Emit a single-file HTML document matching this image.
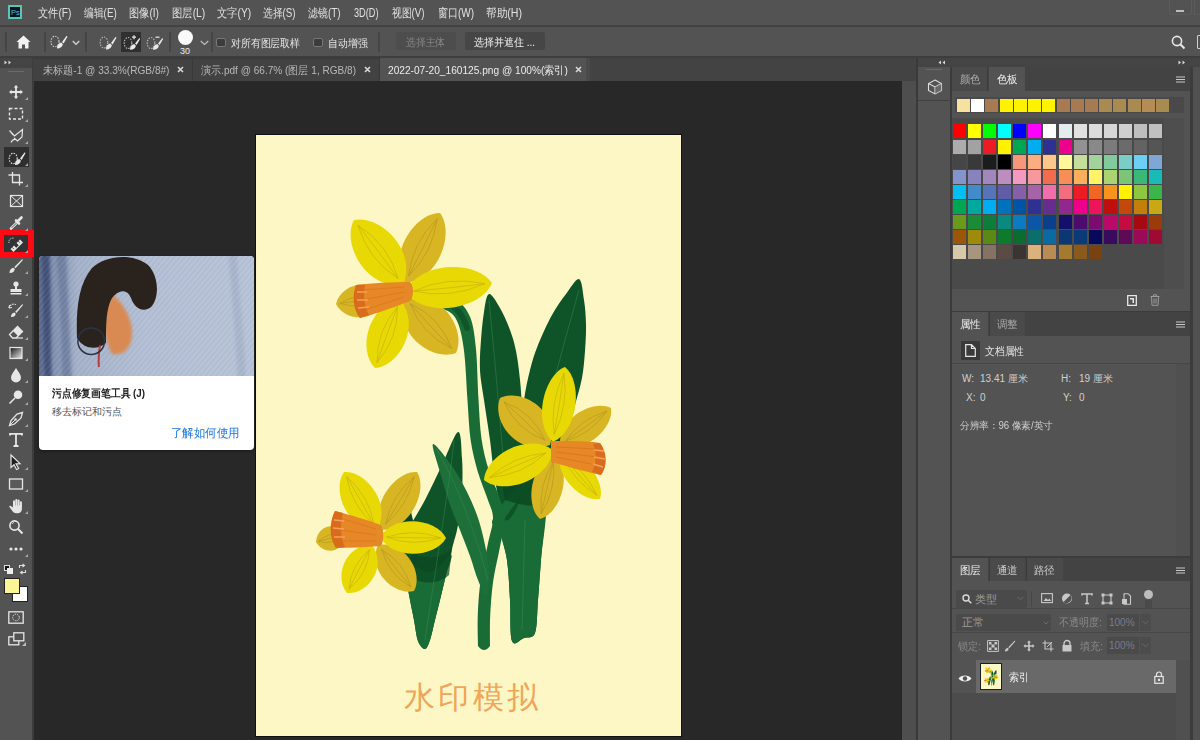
<!DOCTYPE html>
<html><head><meta charset="utf-8">
<style>
*{box-sizing:border-box;margin:0;padding:0}
html,body{width:1200px;height:740px;overflow:hidden;background:#535353;font-family:"Liberation Sans",sans-serif;color:#e0e0e0;font-size:12px}
.a{position:absolute}
.t{position:absolute;white-space:nowrap;line-height:1}
.sw{position:absolute;width:14px;height:14px}
.rs{position:absolute;width:13px;height:13px}
svg{position:absolute;overflow:visible}
</style></head><body>
<!-- ============ MENU BAR ============ -->
<div class="a" style="left:0;top:0;width:1200px;height:25px;background:#535353"></div>
<div class="a" style="left:0;top:25px;width:1200px;height:2px;background:#424242"></div>
<!-- PS logo -->
<div class="a" style="left:8px;top:5px;width:14px;height:14px;background:#001820;border:2px solid #5cc4b4"></div>
<div class="t" style="left:11px;top:8.5px;font-size:7.5px;color:#5fb9d6">Ps</div>
<div id="menu">
<div class="t" style="left:38.3px;top:7px;--w:33.4px;transform:scaleX(0.8493);transform-origin:0 0">文件(F)</div>
<div class="t" style="left:83.8px;top:7px;--w:32.7px;transform:scaleX(0.8175);transform-origin:0 0">编辑(E)</div>
<div class="t" style="left:129px;top:7px;--w:30px;transform:scaleX(0.8492);transform-origin:0 0">图像(I)</div>
<div class="t" style="left:171.7px;top:7px;--w:33.3px;transform:scaleX(0.8611);transform-origin:0 0">图层(L)</div>
<div class="t" style="left:216.5px;top:7px;--w:34.3px;transform:scaleX(0.8575);transform-origin:0 0">文字(Y)</div>
<div class="t" style="left:263.4px;top:7px;--w:32.6px;transform:scaleX(0.8150);transform-origin:0 0">选择(S)</div>
<div class="t" style="left:308.4px;top:7px;--w:32.6px;transform:scaleX(0.8289);transform-origin:0 0">滤镜(T)</div>
<div class="t" style="left:353.5px;top:7px;--w:24.5px;transform:scaleX(0.7656);transform-origin:0 0">3D(D)</div>
<div class="t" style="left:391.8px;top:7px;--w:32.6px;transform:scaleX(0.8150);transform-origin:0 0">视图(V)</div>
<div class="t" style="left:438px;top:7px;--w:36px;transform:scaleX(0.8309);transform-origin:0 0">窗口(W)</div>
<div class="t" style="left:486.4px;top:7px;--w:36px;transform:scaleX(0.8851);transform-origin:0 0">帮助(H)</div>
</div>
<!-- window buttons -->
<div class="a" style="left:1169px;top:-1px;width:23px;height:16px;border:1px solid #5c5c5c;border-top:none;border-radius:0 0 3px 3px"></div>
<div class="a" style="left:1176px;top:10px;width:8px;height:2px;background:#bdbdbd"></div>
<div class="a" style="left:1194px;top:-1px;width:10px;height:16px;border:1px solid #5c5c5c;border-top:none"></div>

<!-- ============ OPTIONS BAR ============ -->
<div class="a" style="left:0;top:27px;width:1200px;height:29px;background:#535353"></div>
<div class="a" style="left:0;top:56px;width:1200px;height:2px;background:#3d3d3d"></div>

<!-- options content -->
<div class="a" style="left:5px;top:32px;width:2px;height:20px;background:#454545"></div>
<svg style="left:16px;top:35px" width="15" height="14" viewBox="0 0 15 14"><path d="M7.5 0.5 L14.5 7 L12.5 7 L12.5 13.5 L9 13.5 L9 9.5 L6 9.5 L6 13.5 L2.5 13.5 L2.5 7 L0.5 7 Z" fill="#f2f2f2"/></svg>
<div class="a" style="left:44px;top:32px;width:2px;height:20px;background:#454545"></div>
<svg style="left:50px;top:35px" width="18" height="14" viewBox="0 0 18 14"><ellipse cx="5" cy="6.5" rx="4" ry="5.3" fill="none" stroke="#cfcfcf" stroke-width="1.1" stroke-dasharray="1.5 1.2"/><path d="M7 13.5 C6.8 10.5 8.5 8.2 11.2 7.6 L12.9 9.3 C12.4 12 10.2 13.6 7 13.5Z M12 7 L16.3 1.2 C16.8 0.8 17.6 1.4 17.3 2 L13.6 8.4Z" fill="#ededed"/></svg>
<svg style="left:72px;top:40px" width="8" height="6" viewBox="0 0 8 6"><path d="M0.7 1 L4 4.3 L7.3 1" fill="none" stroke="#cfcfcf" stroke-width="1.3"/></svg>
<div class="a" style="left:85px;top:32px;width:2px;height:20px;background:#454545"></div>
<svg style="left:99px;top:36px" width="18" height="14" viewBox="0 0 18 14"><ellipse cx="5" cy="6.5" rx="3.8" ry="5.5" fill="none" stroke="#bdbdbd" stroke-width="1.1" stroke-dasharray="1.5 1.2"/><path d="M7 13.5 C6.8 10.5 8.5 8.2 11.2 7.6 L12.9 9.3 C12.4 12 10.2 13.6 7 13.5Z M12 7 L16.3 1.2 C16.8 0.8 17.6 1.4 17.3 2 L13.6 8.4Z" fill="#e8e8e8"/></svg>
<div class="a" style="left:121px;top:32px;width:20px;height:20px;background:#2f2f2f"></div>
<svg style="left:123px;top:36px" width="18" height="14" viewBox="0 0 18 14"><ellipse cx="5" cy="7" rx="3.8" ry="5.5" fill="none" stroke="#bdbdbd" stroke-width="1.1" stroke-dasharray="1.5 1.2"/><path d="M9 1.2 H13 M11 -0.8 V3.2" stroke="#e8e8e8" stroke-width="1.2"/><path d="M7 13.8 C6.8 11 8.5 8.7 11.2 8.1 L12.9 9.8 C12.4 12.5 10.2 13.9 7 13.8Z M12 7.5 L16 2.5 C16.5 2.1 17.3 2.7 17 3.3 L13.6 8.9Z" fill="#e8e8e8"/></svg>
<svg style="left:146px;top:36px" width="18" height="14" viewBox="0 0 18 14"><ellipse cx="5" cy="7" rx="3.8" ry="5.5" fill="none" stroke="#bdbdbd" stroke-width="1.1" stroke-dasharray="1.5 1.2"/><path d="M9.5 1.2 H13.5" stroke="#e8e8e8" stroke-width="1.2"/><path d="M7 13.8 C6.8 11 8.5 8.7 11.2 8.1 L12.9 9.8 C12.4 12.5 10.2 13.9 7 13.8Z M12 7.5 L16 2.5 C16.5 2.1 17.3 2.7 17 3.3 L13.6 8.9Z" fill="#e8e8e8"/></svg>
<div class="a" style="left:169px;top:32px;width:2px;height:20px;background:#454545"></div>
<div class="a" style="left:178px;top:30px;width:15px;height:15px;border-radius:50%;background:#fafafa"></div>
<div class="t" style="left:180px;top:47px;font-size:9px;color:#ececec">30</div>
<svg style="left:200px;top:40px" width="9" height="6" viewBox="0 0 9 6"><path d="M0.7 1 L4.5 4.5 L8.3 1" fill="none" stroke="#bdbdbd" stroke-width="1.2"/></svg>
<div class="a" style="left:211px;top:32px;width:2px;height:20px;background:#454545"></div>
<div class="a" style="left:216px;top:38px;width:10px;height:9px;border:1px solid #777;background:#3c3c3c;border-radius:2px"></div>
<div class="t" style="left:231px;top:38px;font-size:11px;color:#e6e6e6;--w:69px;transform:scaleX(0.8961);transform-origin:0 0">对所有图层取样</div>
<div class="a" style="left:313px;top:38px;width:10px;height:9px;border:1px solid #777;background:#3c3c3c;border-radius:2px"></div>
<div class="t" style="left:328px;top:38px;font-size:11px;color:#e6e6e6;--w:39.5px;transform:scaleX(0.8977);transform-origin:0 0">自动增强</div>
<div class="a" style="left:378px;top:32px;width:2px;height:20px;background:#454545"></div>
<div class="a" style="left:396px;top:32px;width:60px;height:18px;background:#4d4d4d;border-radius:2px"></div>
<div class="t" style="left:406px;top:37px;font-size:11px;color:#858585;--w:39.2px;transform:scaleX(0.8909);transform-origin:0 0">选择主体</div>
<div class="a" style="left:465px;top:32px;width:80px;height:18px;background:#464646;border-radius:2px"></div>
<div class="t" style="left:474px;top:37px;font-size:11px;color:#f0f0f0;--w:61px;transform:scaleX(0.9073);transform-origin:0 0">选择并遮住 ...</div>
<svg style="left:1171px;top:35px" width="15" height="15" viewBox="0 0 15 15"><circle cx="6" cy="6" r="4.6" fill="none" stroke="#e6e6e6" stroke-width="1.6"/><path d="M9.3 9.3 L13.5 13.5" stroke="#e6e6e6" stroke-width="2"/></svg>
<div class="a" style="left:1197px;top:35px;width:8px;height:14px;border:1.5px solid #d0d0d0;border-radius:1px"></div>

<!-- ============ TAB BAR ============ -->
<div class="a" style="left:0;top:58px;width:918px;height:23px;background:#434343"></div>

<!-- ============ CANVAS AREA ============ -->
<div class="a" style="left:33px;top:81px;width:869px;height:659px;background:#282828"></div>
<div class="a" style="left:902px;top:81px;width:14px;height:659px;background:#4e4e4e"></div>
<div class="a" style="left:916px;top:58px;width:2px;height:682px;background:#3a3a3a"></div>

<!-- ============ DOCUMENT ============ -->
<div class="a" style="left:255px;top:134px;width:427px;height:603px;background:#111"></div>
<div class="a" style="left:256px;top:135px;width:425px;height:601px;background:#fdf7c6"></div>
<svg style="left:256px;top:135px" width="425" height="601" viewBox="256 135 425 601">
<g id="fl"><!--FLOWER-->
<path d="M579.0 279.0 C582.0 280.0 582.8 292.5 584.0 300.0 C585.2 307.5 585.8 315.5 586.0 324.0 C586.2 332.5 585.7 342.0 585.0 351.0 C584.3 360.0 583.7 369.0 582.0 378.0 C580.3 387.0 577.7 394.7 575.0 405.0 C572.3 415.3 569.2 429.2 566.0 440.0 C562.8 450.8 559.0 460.0 556.0 470.0 C553.0 480.0 550.0 490.0 548.0 500.0 C546.0 510.0 545.2 520.0 544.0 530.0 C542.8 540.0 542.0 548.3 541.0 560.0 C540.0 571.7 539.0 587.8 538.0 600.0 C537.0 612.2 537.3 626.7 535.0 633.0 C532.7 639.3 527.8 636.7 524.0 638.0 C520.2 639.3 514.3 647.3 512.0 641.0 C509.7 634.7 510.8 613.5 510.0 600.0 C509.2 586.5 508.7 572.0 507.0 560.0 C505.3 548.0 500.7 537.2 500.0 528.0 C499.3 518.8 501.0 514.7 503.0 505.0 C505.0 495.3 509.2 480.8 512.0 470.0 C514.8 459.2 518.0 451.7 520.0 440.0 C522.0 428.3 522.3 411.7 524.0 400.0 C525.7 388.3 527.7 379.2 530.0 370.0 C532.3 360.8 534.3 354.2 538.0 345.0 C541.7 335.8 547.3 323.5 552.0 315.0 C556.7 306.5 561.5 300.0 566.0 294.0 C570.5 288.0 576.0 278.0 579.0 279.0Z" fill="#0e5428"/>
<path d="M545.0 500.0 C548.5 511.7 542.2 543.3 541.0 560.0 C539.8 576.7 539.0 587.8 538.0 600.0 C537.0 612.2 537.3 626.7 535.0 633.0 C532.7 639.3 527.8 636.7 524.0 638.0 C520.2 639.3 514.3 647.3 512.0 641.0 C509.7 634.7 510.8 613.5 510.0 600.0 C509.2 586.5 508.7 572.0 507.0 560.0 C505.3 548.0 500.3 537.2 500.0 528.0 C499.7 518.8 501.7 511.3 505.0 505.0 C508.3 498.7 513.3 490.8 520.0 490.0 C526.7 489.2 541.5 488.3 545.0 500.0Z" fill="#1a6c36"/>
<path d="M489.0 294.0 C491.7 293.3 496.5 302.0 500.0 308.0 C503.5 314.0 507.3 322.8 510.0 330.0 C512.7 337.2 514.3 342.7 516.0 351.0 C517.7 359.3 518.8 368.5 520.0 380.0 C521.2 391.5 522.0 406.7 523.0 420.0 C524.0 433.3 526.5 446.7 526.0 460.0 C525.5 473.3 523.5 490.0 520.0 500.0 C516.5 510.0 509.2 523.3 505.0 520.0 C500.8 516.7 497.5 493.3 495.0 480.0 C492.5 466.7 491.8 453.3 490.0 440.0 C488.2 426.7 485.7 411.7 484.0 400.0 C482.3 388.3 480.5 380.0 480.0 370.0 C479.5 360.0 480.3 349.7 481.0 340.0 C481.7 330.3 482.7 319.7 484.0 312.0 C485.3 304.3 486.3 294.7 489.0 294.0Z" fill="#0e5428"/>
<path d="M407.0 504.0 C409.0 501.7 410.5 510.0 412.0 516.0 C413.5 522.0 415.0 531.0 416.0 540.0 C417.0 549.0 418.7 561.7 418.0 570.0 C417.3 578.3 414.5 591.7 412.0 590.0 C409.5 588.3 405.0 570.0 403.0 560.0 C401.0 550.0 399.3 539.3 400.0 530.0 C400.7 520.7 405.0 506.3 407.0 504.0Z" fill="#0a4620"/>
<path d="M458.0 432.0 C461.3 430.8 461.3 448.3 462.0 458.0 C462.7 467.7 462.7 478.8 462.0 490.0 C461.3 501.2 459.7 515.2 458.0 525.0 C456.3 534.8 454.0 540.7 452.0 549.0 C450.0 557.3 448.0 566.5 446.0 575.0 C444.0 583.5 441.8 592.5 440.0 600.0 C438.2 607.5 436.7 613.3 435.0 620.0 C433.3 626.7 431.7 635.2 430.0 640.0 C428.3 644.8 427.0 648.8 425.0 649.0 C423.0 649.2 419.8 645.8 418.0 641.0 C416.2 636.2 415.3 626.8 414.0 620.0 C412.7 613.2 411.3 607.5 410.0 600.0 C408.7 592.5 407.5 583.5 406.0 575.0 C404.5 566.5 400.7 556.5 401.0 549.0 C401.3 541.5 404.0 538.2 408.0 530.0 C412.0 521.8 419.3 510.8 425.0 500.0 C430.7 489.2 436.5 476.3 442.0 465.0 C447.5 453.7 454.7 433.2 458.0 432.0Z" fill="#0e5428"/>
<path d="M451.0 555.0 C453.7 555.5 447.8 567.5 446.0 575.0 C444.2 582.5 441.8 592.5 440.0 600.0 C438.2 607.5 436.7 613.3 435.0 620.0 C433.3 626.7 431.7 635.2 430.0 640.0 C428.3 644.8 427.0 648.8 425.0 649.0 C423.0 649.2 419.8 645.8 418.0 641.0 C416.2 636.2 415.3 626.8 414.0 620.0 C412.7 613.2 411.3 606.7 410.0 600.0 C408.7 593.3 407.0 586.7 406.0 580.0 C405.0 573.3 400.0 561.3 404.0 560.0 C408.0 558.7 422.2 572.8 430.0 572.0 C437.8 571.2 448.3 554.5 451.0 555.0Z" fill="#1a6c36"/>
<path d="M432.0 307.2 C434.7 307.9 443.7 308.5 448.0 311.0 C452.3 313.6 455.1 315.9 457.7 322.5 C460.4 329.1 462.4 337.7 464.0 350.7 C465.7 363.6 466.4 385.5 467.5 400.4 C468.6 415.2 468.9 427.9 470.6 439.8 C472.3 451.6 474.9 461.7 477.7 471.5 C480.6 481.4 485.0 491.1 487.5 498.8 C490.1 506.6 492.9 510.6 493.0 518.1 C493.1 525.6 489.9 533.6 487.9 543.8 C485.8 554.0 482.5 567.3 480.8 579.1 C479.1 590.9 478.2 603.6 477.8 614.7 C477.3 625.9 478.0 640.8 478.0 646.0 Q484.0 654.0 490.0 646.0 C490.0 640.9 489.7 626.1 490.2 615.3 C490.8 604.4 491.5 592.4 493.2 580.9 C494.8 569.4 498.2 556.7 500.1 546.2 C502.1 535.7 505.3 526.4 505.0 517.9 C504.7 509.4 501.2 503.4 498.5 495.2 C495.7 486.9 491.1 477.9 488.3 468.5 C485.4 459.0 483.1 449.7 481.4 438.2 C479.8 426.8 479.4 414.4 478.5 399.6 C477.6 384.8 477.3 363.0 476.0 349.3 C474.6 335.6 473.6 325.9 470.3 317.5 C466.9 309.1 461.7 303.1 456.0 299.0 C450.3 294.8 439.3 293.8 436.0 292.8Z" fill="#1a6c36"/>
<path d="M497 522 C506 505 520 488 548 465" fill="none" stroke="#1a6c36" stroke-width="10" stroke-linecap="round"/>
<path d="M433.0 444.0 C435.0 443.0 446.3 458.0 452.0 466.0 C457.7 474.0 462.7 483.3 467.0 492.0 C471.3 500.7 475.0 509.2 478.0 518.0 C481.0 526.8 483.2 536.0 485.0 545.0 C486.8 554.0 488.8 563.7 489.0 572.0 C489.2 580.3 487.8 593.7 486.0 595.0 C484.2 596.3 480.7 586.5 478.0 580.0 C475.3 573.5 473.0 564.3 470.0 556.0 C467.0 547.7 463.5 539.0 460.0 530.0 C456.5 521.0 452.3 511.7 449.0 502.0 C445.7 492.3 442.7 481.7 440.0 472.0 C437.3 462.3 431.0 445.0 433.0 444.0Z" fill="#1d7039"/>
<path d="M437 299 C452 302 462 311 467 328" fill="none" stroke="#0e5428" stroke-width="6" stroke-linecap="round" opacity="0.85"/>
<path d="M500 470 C520 480 545 475 560 462 L556 500 C540 510 520 505 505 500Z" fill="#0a4620" opacity="0.8"/>
<path d="M412 552 C425 560 440 560 452 548 L449 575 C438 585 420 585 408 575Z" fill="#0a4620" opacity="0.7"/>
<path d="M579 290 C565 340 548 400 535 460 M489 300 C495 360 500 420 505 480 M454 440 C450 480 440 540 425 640 M436 448 C455 480 475 530 488 580 M525 520 L522 630" fill="none" stroke="#3a8a55" stroke-width="0.8" opacity="0.6"/>
<path d="M405.0 283.0 C438.5 280.5 455.2 232.9 440.0 213.0 C415.0 212.7 386.9 254.7 405.0 283.0Z" fill="#d7b523"/>
<path d="M408.5 276.0 Q432.7 253.1 437.2 218.6 M408.5 276.0 Q412.3 242.9 437.2 218.6 M408.5 276.0 Q423.2 248.3 437.2 218.6" fill="none" stroke="#b89a22" stroke-width="0.8" opacity="0.9"/>
<path d="M405.0 298.0 C392.8 331.8 430.6 362.2 456.0 353.0 C467.1 328.4 439.6 288.4 405.0 298.0Z" fill="#d7b523"/>
<path d="M410.1 303.5 Q421.3 334.1 451.9 348.6 M410.1 303.5 Q439.7 316.9 451.9 348.6 M410.1 303.5 Q429.9 326.1 451.9 348.6" fill="none" stroke="#b89a22" stroke-width="0.8" opacity="0.9"/>
<path d="M385.0 298.0 C371.3 275.2 340.6 284.3 336.0 304.0 C345.2 322.0 377.2 323.5 385.0 298.0Z" fill="#d7b523"/>
<path d="M380.1 298.6 Q359.3 291.5 339.9 303.5 M380.1 298.6 Q361.7 310.5 339.9 303.5 M380.1 298.6 Q360.4 300.4 339.9 303.5" fill="none" stroke="#b89a22" stroke-width="0.8" opacity="0.9"/>
<path d="M403.0 285.0 C417.7 251.5 380.7 214.1 354.0 220.0 C341.0 244.1 366.7 289.9 403.0 285.0Z" fill="#e8d904"/>
<path d="M398.1 278.5 Q388.6 244.9 357.9 225.2 M398.1 278.5 Q368.4 260.1 357.9 225.2 M398.1 278.5 Q379.2 252.0 357.9 225.2" fill="none" stroke="#c9b40c" stroke-width="0.8" opacity="0.9"/>
<path d="M405.0 292.0 C427.3 320.3 482.3 307.8 492.0 283.0 C477.4 260.7 421.0 259.8 405.0 292.0Z" fill="#e8d904"/>
<path d="M413.7 291.1 Q449.7 299.4 485.0 283.7 M413.7 291.1 Q447.3 275.6 485.0 283.7 M413.7 291.1 Q448.6 288.3 485.0 283.7" fill="none" stroke="#c9b40c" stroke-width="0.8" opacity="0.9"/>
<path d="M400.0 300.0 C367.4 305.0 357.4 350.7 375.0 368.0 C399.6 366.3 421.6 324.9 400.0 300.0Z" fill="#e8d904"/>
<path d="M397.5 306.8 Q376.8 330.1 377.0 362.6 M397.5 306.8 Q398.2 337.9 377.0 362.6 M397.5 306.8 Q386.8 333.7 377.0 362.6" fill="none" stroke="#c9b40c" stroke-width="0.8" opacity="0.9"/>
<path d="M410 282 C414 285 414 297 410 301 C395 307 375 314 360 318 C353 308 353 294 356 285 C372 283 392 282 410 282Z" fill="#e68826"/>
<path d="M404 287 L362 290 M404 292 L362 300 M404 297 L364 310" stroke="#d96c1c" stroke-width="0.9" opacity="0.6"/>
<path d="M356 285 C352 295 353 310 360 318 L369 315 C364 306 363 294 365 285Z" fill="#d96c1c"/><path d="M357 292 L367 292 M357 300 L368 300 M358 308 L369 307" stroke="#f4a05a" stroke-width="1.4"/>
<path d="M550.0 445.0 C559.8 412.5 523.2 387.3 500.0 398.0 C490.8 421.9 518.2 456.8 550.0 445.0Z" fill="#d7b523"/>
<path d="M545.0 440.3 Q533.2 412.8 504.0 401.8 M545.0 440.3 Q516.8 430.2 504.0 401.8 M545.0 440.3 Q525.5 420.9 504.0 401.8" fill="none" stroke="#b89a22" stroke-width="0.8" opacity="0.9"/>
<path d="M560.0 445.0 C584.6 455.3 614.3 427.6 611.0 408.0 C593.4 398.8 557.8 418.4 560.0 445.0Z" fill="#d7b523"/>
<path d="M565.1 441.3 Q590.8 433.8 606.9 411.0 M565.1 441.3 Q580.2 419.2 606.9 411.0 M565.1 441.3 Q585.9 427.0 606.9 411.0" fill="none" stroke="#b89a22" stroke-width="0.8" opacity="0.9"/>
<path d="M555.0 455.0 C529.5 463.9 524.8 506.0 540.0 519.0 C559.4 514.1 573.9 474.3 555.0 455.0Z" fill="#d7b523"/>
<path d="M553.5 461.4 Q538.7 484.9 541.2 513.9 M553.5 461.4 Q556.3 489.1 541.2 513.9 M553.5 461.4 Q546.9 486.9 541.2 513.9" fill="none" stroke="#b89a22" stroke-width="0.8" opacity="0.9"/>
<path d="M553.0 442.0 C579.7 429.3 582.1 380.5 565.0 367.0 C544.6 374.5 531.6 421.7 553.0 442.0Z" fill="#e8d904"/>
<path d="M554.2 434.5 Q568.5 406.0 564.0 373.0 M554.2 434.5 Q549.5 403.0 564.0 373.0 M554.2 434.5 Q559.6 404.6 564.0 373.0" fill="none" stroke="#c9b40c" stroke-width="0.8" opacity="0.9"/>
<path d="M553.0 450.0 C526.9 431.5 485.2 456.2 484.0 480.0 C502.2 495.4 548.7 481.7 553.0 450.0Z" fill="#e8d904"/>
<path d="M546.1 453.0 Q514.2 455.1 489.5 477.6 M546.1 453.0 Q522.8 474.9 489.5 477.6 M546.1 453.0 Q518.2 464.3 489.5 477.6" fill="none" stroke="#c9b40c" stroke-width="0.8" opacity="0.9"/>
<path d="M560.0 453.0 C553.9 476.1 582.8 502.7 600.0 499.0 C606.0 482.4 583.7 450.2 560.0 453.0Z" fill="#e8d904"/>
<path d="M564.0 457.6 Q574.1 481.1 596.8 495.3 M564.0 457.6 Q585.9 470.9 596.8 495.3 M564.0 457.6 Q579.6 476.3 596.8 495.3" fill="none" stroke="#c9b40c" stroke-width="0.8" opacity="0.9"/>
<path d="M551 441 C568 441 588 441 600 443 C606 452 607 466 601 475 C586 472 566 466 551 462Z" fill="#e68826"/>
<path d="M556 447 L596 449 M556 452 L597 457 M556 457 L596 465" stroke="#d96c1c" stroke-width="0.9" opacity="0.7"/>
<path d="M600 443 C607 452 608 466 601 475 L592 472 C596 465 597 453 593 444Z" fill="#d96c1c"/><path d="M594 450 L604 451 M594 457 L605 459 M593 464 L603 467" stroke="#f4a05a" stroke-width="1.4"/>
<path d="M382.0 530.0 C410.5 529.8 428.3 489.9 417.0 472.0 C395.9 470.3 368.9 504.7 382.0 530.0Z" fill="#d7b523"/>
<path d="M385.5 524.2 Q407.7 506.0 414.2 476.6 M385.5 524.2 Q391.3 496.0 414.2 476.6 M385.5 524.2 Q400.0 501.3 414.2 476.6" fill="none" stroke="#b89a22" stroke-width="0.8" opacity="0.9"/>
<path d="M378.0 545.0 C366.8 570.1 394.0 596.3 414.0 591.0 C423.9 572.9 405.1 540.1 378.0 545.0Z" fill="#d7b523"/>
<path d="M381.6 549.6 Q388.4 573.9 411.1 587.3 M381.6 549.6 Q403.6 562.1 411.1 587.3 M381.6 549.6 Q395.5 568.4 411.1 587.3" fill="none" stroke="#b89a22" stroke-width="0.8" opacity="0.9"/>
<path d="M345.0 535.0 C334.3 518.8 316.7 527.2 316.0 542.0 C323.4 554.9 342.9 554.3 345.0 535.0Z" fill="#d7b523"/>
<path d="M342.1 535.7 Q328.8 531.5 318.3 541.4 M342.1 535.7 Q332.2 545.5 318.3 541.4 M342.1 535.7 Q330.4 538.0 318.3 541.4" fill="none" stroke="#b89a22" stroke-width="0.8" opacity="0.9"/>
<path d="M377.0 530.0 C392.2 504.5 366.1 470.2 344.0 472.0 C331.1 490.1 347.3 530.0 377.0 530.0Z" fill="#e8d904"/>
<path d="M373.7 524.2 Q369.4 496.0 346.6 476.6 M373.7 524.2 Q351.6 506.0 346.6 476.6 M373.7 524.2 Q361.1 500.7 346.6 476.6" fill="none" stroke="#c9b40c" stroke-width="0.8" opacity="0.9"/>
<path d="M380.0 537.0 C394.2 561.5 436.5 556.8 446.0 538.0 C437.0 518.9 394.9 512.9 380.0 537.0Z" fill="#e8d904"/>
<path d="M386.6 537.1 Q412.9 547.1 440.7 537.9 M386.6 537.1 Q413.1 527.9 440.7 537.9 M386.6 537.1 Q413.0 538.1 440.7 537.9" fill="none" stroke="#c9b40c" stroke-width="0.8" opacity="0.9"/>
<path d="M372.0 545.0 C344.9 544.3 333.7 577.5 347.0 593.0 C367.3 595.0 388.1 566.8 372.0 545.0Z" fill="#e8d904"/>
<path d="M369.5 549.8 Q351.0 564.6 349.0 589.2 M369.5 549.8 Q368.0 573.4 349.0 589.2 M369.5 549.8 Q358.9 568.7 349.0 589.2" fill="none" stroke="#c9b40c" stroke-width="0.8" opacity="0.9"/>
<path d="M381 525 C384 530 384 541 381 546 C366 547 350 548 336 548 C330 538 330 522 335 511 C350 515 368 520 381 525Z" fill="#e68826"/>
<path d="M376 529 L340 518 M376 535 L340 530 M376 541 L341 541" stroke="#d96c1c" stroke-width="0.9" opacity="0.6"/>
<path d="M335 511 C329 522 329 538 336 548 L345 547 C340 537 340 523 343 513Z" fill="#d96c1c"/><path d="M334 520 L344 521 M333 528 L344 529 M334 537 L345 537" stroke="#f4a05a" stroke-width="1.4"/>
<!--/FLOWER--></g>
</svg>
<div class="t" style="left:403.5px;top:682px;font-size:31px;letter-spacing:3.5px;color:#f0a558">水印模拟</div>
<!-- ============ TOOLTIP CARD ============ -->
<div class="a" style="left:39px;top:256px;width:215px;height:194px;background:#fff;border-radius:4px;overflow:hidden;box-shadow:0 1px 3px rgba(0,0,0,.4)">
<svg style="left:0;top:0;overflow:hidden" width="215" height="120" viewBox="39 256 215 120">
<defs>
<linearGradient id="den" x1="0" y1="0" x2="1" y2="0"><stop offset="0" stop-color="#56668c"/><stop offset="0.06" stop-color="#7c8cad"/><stop offset="0.18" stop-color="#a3b0c8"/><stop offset="0.5" stop-color="#b2bed3"/><stop offset="1" stop-color="#b6c2d6"/></linearGradient>
<pattern id="twill" width="4" height="4" patternUnits="userSpaceOnUse" patternTransform="rotate(-50)"><path d="M0 1 H4" stroke="#ffffff" stroke-opacity="0.13" stroke-width="1"/><path d="M0 3 H4" stroke="#405070" stroke-opacity="0.07" stroke-width="1"/></pattern>
<filter id="blur1"><feGaussianBlur stdDeviation="1.5"/></filter>
<filter id="blur2"><feGaussianBlur stdDeviation="0.6"/></filter>
</defs>
<rect x="39" y="256" width="215" height="120" fill="url(#den)"/>
<path d="M41 246 C44 300 42 340 45 386 L52 386 C50 340 52 300 49 246Z" fill="#34426a" opacity="0.8" filter="url(#blur1)"/>
<path d="M56 246 C60 300 62 340 62 386 L72 386 C70 340 68 300 66 246Z" fill="#5c6c90" opacity="0.6" filter="url(#blur1)"/>
<path d="M228 246 C232 300 236 340 238 386 L246 386 C244 340 240 300 236 246Z" fill="#97a6c0" opacity="0.5" filter="url(#blur1)"/>
<rect x="39" y="256" width="215" height="120" fill="url(#twill)"/>
<path d="M104 290 C114 292 130 310 132 330 C133 345 126 356 112 354 C104 340 100 310 104 290Z" fill="#d98a52" filter="url(#blur1)"/>
<path d="M77 338 C76 310 78 285 92 268 C104 256 132 252 148 265 C158 275 160 295 152 306 C145 313 135 310 131 298 C127 288 118 290 112 298 C106 308 106 325 106 343 C98 350 84 350 77 338Z" fill="#2a201b" filter="url(#blur2)"/>
<path d="M100 345 C99 352 98 360 99 367" fill="none" stroke="#b8302a" stroke-width="2" opacity="0.9"/>
<circle cx="91.2" cy="341.2" r="13.3" fill="none" stroke="#2c3444" stroke-width="1.5"/>
</svg>
<div class="t" style="left:13px;top:132px;font-size:11px;font-weight:bold;color:#1e1e1e;--w:93px;transform:scaleX(0.8900);transform-origin:0 0">污点修复画笔工具 (J)</div>
<div class="t" style="left:13px;top:151px;font-size:10px;color:#505050;--w:70px;transform:scaleX(1.0000);transform-origin:0 0">移去标记和污点</div>
<div class="t" style="left:132px;top:171px;font-size:12px;color:#1473e6;--w:69px;transform:scaleX(0.9583);transform-origin:0 0">了解如何使用</div>
</div>

<!-- ============ TOOLBAR ============ -->
<div class="a" style="left:0;top:58px;width:33px;height:10px;background:#444"></div>
<div class="a" style="left:0;top:68px;width:32px;height:672px;background:#535353"></div>
<div class="a" style="left:32px;top:58px;width:2px;height:682px;background:#3c3c3c"></div>

<!-- toolbar icons -->
<div class="a" style="left:8px;top:71px;width:16px;height:1px;background:#6a6a6a"></div>
<svg style="left:4px;top:60px" width="8" height="5" viewBox="0 0 8 5"><path d="M0.5 0.5 L3 2.5 L0.5 4.5Z M4.5 0.5 L7 2.5 L4.5 4.5Z" fill="#d8d8d8"/></svg>
<div class="a" style="left:4px;top:147px;width:25px;height:20px;background:#2f2f2f"></div>
<div class="a" style="left:0;top:230px;width:34px;height:27px;background:#ff0a14"></div>
<div class="a" style="left:4px;top:235px;width:24px;height:17px;background:#333"></div>
<svg style="left:8px;top:84px" width="16" height="16" viewBox="0 0 16 16"><path d="M8 1 L10.3 3.6 H8.9 V7.1 H12.4 V5.7 L15 8 L12.4 10.3 V8.9 H8.9 V12.4 H10.3 L8 15 L5.7 12.4 H7.1 V8.9 H3.6 V10.3 L1 8 L3.6 5.7 V7.1 H7.1 V3.6 H5.7Z" fill="#e6e6e6"/></svg>
<svg style="left:24px;top:96px" width="4" height="4" viewBox="0 0 4 4"><path d="M4 1 V4 H1Z" fill="#a8a8a8"/></svg>
<svg style="left:8px;top:106px" width="16" height="16" viewBox="0 0 16 16"><rect x="1.5" y="2.5" width="13" height="10.5" fill="none" stroke="#e6e6e6" stroke-width="1.4" stroke-dasharray="3 2"/></svg>
<svg style="left:24px;top:118px" width="4" height="4" viewBox="0 0 4 4"><path d="M4 1 V4 H1Z" fill="#a8a8a8"/></svg>
<svg style="left:8px;top:128px" width="16" height="16" viewBox="0 0 16 16"><path d="M1.5 2.5 L6.5 8 L14.5 1.5 L14 9 L9.5 13 L6 10 M1.5 2.5 L5 7" fill="none" stroke="#e6e6e6" stroke-width="1.2"/><path d="M3 14.5 C4 12 6 11 8 11.5" fill="none" stroke="#e6e6e6" stroke-width="1.1"/></svg>
<svg style="left:24px;top:140px" width="4" height="4" viewBox="0 0 4 4"><path d="M4 1 V4 H1Z" fill="#a8a8a8"/></svg>
<svg style="left:8px;top:150px" width="16" height="16" viewBox="0 0 16 16"><ellipse cx="5.2" cy="8.5" rx="4" ry="5.2" fill="none" stroke="#e6e6e6" stroke-width="1.1" stroke-dasharray="1.5 1.2"/><path d="M7 15 C6.8 12 8.5 9.7 11.2 9.1 L12.9 10.8 C12.4 13.5 10.2 15.1 7 15Z M12 8.5 L16.3 2.7 C16.8 2.3 17.6 2.9 17.3 3.5 L13.6 9.9Z" fill="#e6e6e6"/></svg>
<svg style="left:24px;top:162px" width="4" height="4" viewBox="0 0 4 4"><path d="M4 1 V4 H1Z" fill="#a8a8a8"/></svg>
<svg style="left:8px;top:171px" width="16" height="16" viewBox="0 0 16 16"><path d="M4.5 1 V11.5 H13.5 M0.5 4 H11.5 V14.5 M13.5 11.5 H15" fill="none" stroke="#e6e6e6" stroke-width="1.3"/></svg>
<svg style="left:24px;top:183px" width="4" height="4" viewBox="0 0 4 4"><path d="M4 1 V4 H1Z" fill="#a8a8a8"/></svg>
<svg style="left:8px;top:193px" width="16" height="16" viewBox="0 0 16 16"><rect x="2.5" y="2.5" width="12" height="11" fill="none" stroke="#e6e6e6" stroke-width="1.2"/><path d="M2.5 2.5 L14.5 13.5 M14.5 2.5 L2.5 13.5" stroke="#e6e6e6" stroke-width="1"/></svg>
<svg style="left:8px;top:215px" width="16" height="16" viewBox="0 0 16 16"><path d="M3 13.5 L9.5 7" stroke="#e6e6e6" stroke-width="2.6" stroke-linecap="round" fill="none"/><path d="M3.6 12.9 L9.3 7.2" stroke="#535353" stroke-width="0.9"/><path d="M8 5.5 L11 8.5 M9.5 6.5 L13.5 2.5" stroke="#e6e6e6" stroke-width="2.6" stroke-linecap="round"/></svg>
<svg style="left:24px;top:227px" width="4" height="4" viewBox="0 0 4 4"><path d="M4 1 V4 H1Z" fill="#a8a8a8"/></svg>
<svg style="left:8px;top:237px" width="16" height="16" viewBox="0 0 16 16"><path d="M2.5 12 L12 2.5 L15 5.5 L5.5 15 Z" fill="#e6e6e6"/><rect x="6.5" y="6.5" width="3.5" height="3.5" transform="rotate(45 8.25 8.25)" fill="#333"/><path d="M4.2 10.4 L5.6 11.8 M10.4 4.2 L11.8 5.6" stroke="#333" stroke-width="1"/><path d="M1 6 A4 4 0 0 1 6 1.2" fill="none" stroke="#e6e6e6" stroke-width="1" stroke-dasharray="1.2 1"/></svg>
<svg style="left:24px;top:249px" width="4" height="4" viewBox="0 0 4 4"><path d="M4 1 V4 H1Z" fill="#a8a8a8"/></svg>
<svg style="left:8px;top:258px" width="16" height="16" viewBox="0 0 16 16"><path d="M1.5 15 C1.5 12 3 10 5.5 9.7 L6.8 11 C6.6 13.5 4.5 15.2 1.5 15Z M6.3 9 L13.8 1.5 C14.4 1.1 15 1.7 14.7 2.2 L7.5 10.2Z" fill="#e6e6e6"/></svg>
<svg style="left:24px;top:270px" width="4" height="4" viewBox="0 0 4 4"><path d="M4 1 V4 H1Z" fill="#a8a8a8"/></svg>
<svg style="left:8px;top:280px" width="16" height="16" viewBox="0 0 16 16"><circle cx="8" cy="4" r="2.6" fill="#e6e6e6"/><path d="M7 6 H9 V9 H13.5 V12 H2.5 V9 H7Z" fill="#e6e6e6"/><rect x="2.5" y="13" width="11" height="1.5" fill="#e6e6e6"/></svg>
<svg style="left:24px;top:292px" width="4" height="4" viewBox="0 0 4 4"><path d="M4 1 V4 H1Z" fill="#a8a8a8"/></svg>
<svg style="left:8px;top:302px" width="16" height="16" viewBox="0 0 16 16"><path d="M3 15 C3 12.5 4.3 10.8 6.5 10.5 L7.7 11.7 C7.5 14 5.6 15.2 3 15Z M7.2 9.8 L14 2.5 C14.5 2.1 15.1 2.7 14.8 3.2 L8.4 11Z" fill="#e6e6e6"/><path d="M1 6 C2 2.5 5 1.5 8 2.5" fill="none" stroke="#e6e6e6" stroke-width="1.1" stroke-dasharray="1.5 1"/><path d="M1.5 3 L1 6 L4 5.5" fill="none" stroke="#e6e6e6" stroke-width="1"/></svg>
<svg style="left:24px;top:314px" width="4" height="4" viewBox="0 0 4 4"><path d="M4 1 V4 H1Z" fill="#a8a8a8"/></svg>
<svg style="left:8px;top:324px" width="16" height="16" viewBox="0 0 16 16"><path d="M1.5 10.5 L9.5 2.5 L14.5 7.5 L8 14 H4.5Z" fill="none" stroke="#e6e6e6" stroke-width="1.3"/><path d="M5 7 L10 12 L14.5 7.5 L9.5 2.5Z" fill="#e6e6e6"/><path d="M8 14 H15" stroke="#e6e6e6" stroke-width="1.2"/></svg>
<svg style="left:24px;top:336px" width="4" height="4" viewBox="0 0 4 4"><path d="M4 1 V4 H1Z" fill="#a8a8a8"/></svg>
<svg style="left:8px;top:345px" width="16" height="16" viewBox="0 0 16 16"><defs><linearGradient id="gg" x1="0" y1="0" x2="1" y2="1"><stop offset="0" stop-color="#111"/><stop offset="1" stop-color="#eee"/></linearGradient></defs><rect x="2" y="2.5" width="12" height="11" fill="url(#gg)" stroke="#e6e6e6" stroke-width="1.2"/></svg>
<svg style="left:24px;top:357px" width="4" height="4" viewBox="0 0 4 4"><path d="M4 1 V4 H1Z" fill="#a8a8a8"/></svg>
<svg style="left:8px;top:367px" width="16" height="16" viewBox="0 0 16 16"><path d="M8 1 C10 4.5 13 7.5 13 10.5 A5 5 0 0 1 3 10.5 C3 7.5 6 4.5 8 1Z" fill="#e6e6e6"/></svg>
<svg style="left:24px;top:379px" width="4" height="4" viewBox="0 0 4 4"><path d="M4 1 V4 H1Z" fill="#a8a8a8"/></svg>
<svg style="left:8px;top:389px" width="16" height="16" viewBox="0 0 16 16"><circle cx="10" cy="5.8" r="4.3" fill="#e6e6e6"/><path d="M7 9 L1.5 14.5" stroke="#e6e6e6" stroke-width="1.6"/></svg>
<svg style="left:24px;top:401px" width="4" height="4" viewBox="0 0 4 4"><path d="M4 1 V4 H1Z" fill="#a8a8a8"/></svg>
<svg style="left:8px;top:411px" width="16" height="16" viewBox="0 0 16 16"><path d="M14.5 1.5 L9 3 L3 9.5 L1.5 14.5 L6.5 13 L13 7Z" fill="none" stroke="#e6e6e6" stroke-width="1.3"/><path d="M1.5 14.5 L7 9" stroke="#e6e6e6" stroke-width="1"/><circle cx="7.6" cy="8.4" r="1.2" fill="#e6e6e6"/></svg>
<svg style="left:24px;top:423px" width="4" height="4" viewBox="0 0 4 4"><path d="M4 1 V4 H1Z" fill="#a8a8a8"/></svg>
<svg style="left:8px;top:432px" width="16" height="16" viewBox="0 0 16 16"><path d="M2 3.5 V1.8 H14 V3.5 M8 1.8 V14 M5.5 14 H10.5" fill="none" stroke="#e6e6e6" stroke-width="1.8"/></svg>
<svg style="left:8px;top:454px" width="16" height="16" viewBox="0 0 16 16"><path d="M3 1 L3 13.5 L6 10.8 L8.6 15.5 L10.6 14.5 L8 9.8 L12 9.6Z" fill="#1e1e1e" stroke="#e6e6e6" stroke-width="1.2"/></svg>
<svg style="left:24px;top:466px" width="4" height="4" viewBox="0 0 4 4"><path d="M4 1 V4 H1Z" fill="#a8a8a8"/></svg>
<svg style="left:8px;top:476px" width="16" height="16" viewBox="0 0 16 16"><rect x="1.5" y="3" width="13" height="10" fill="#5a5a5a" stroke="#e6e6e6" stroke-width="1.3"/></svg>
<svg style="left:24px;top:488px" width="4" height="4" viewBox="0 0 4 4"><path d="M4 1 V4 H1Z" fill="#a8a8a8"/></svg>
<svg style="left:8px;top:498px" width="16" height="16" viewBox="0 0 16 16"><path d="M6 8 V3.2 M8.3 8 V2 M10.6 8 V2.6 M12.9 8.5 V4.2" stroke="#e6e6e6" stroke-width="2" stroke-linecap="round"/><path d="M4.9 7.5 H13.9 V11 C13.9 13.6 12.2 15.2 9.6 15.2 H8.2 C6.2 15.2 5.2 14.2 4.2 12.7 L1.4 9 C0.9 8.2 1.9 7.3 2.8 7.9 L4.9 9.6Z" fill="#e6e6e6"/></svg>
<svg style="left:24px;top:510px" width="4" height="4" viewBox="0 0 4 4"><path d="M4 1 V4 H1Z" fill="#a8a8a8"/></svg>
<svg style="left:8px;top:519px" width="16" height="16" viewBox="0 0 16 16"><circle cx="6.5" cy="6.5" r="4.6" fill="none" stroke="#e6e6e6" stroke-width="1.6"/><path d="M9.8 9.8 L14.5 14.5" stroke="#e6e6e6" stroke-width="2"/><path d="M4 5 A3 3 0 0 1 6 3.5" fill="none" stroke="#e6e6e6" stroke-width="0.8"/></svg>
<svg style="left:8px;top:541px" width="16" height="16" viewBox="0 0 16 16"><circle cx="3" cy="8" r="1.6" fill="#e6e6e6"/><circle cx="8" cy="8" r="1.6" fill="#e6e6e6"/><circle cx="13" cy="8" r="1.6" fill="#e6e6e6"/></svg>
<svg style="left:24px;top:553px" width="4" height="4" viewBox="0 0 4 4"><path d="M4 1 V4 H1Z" fill="#a8a8a8"/></svg>
<!-- toolbar bottom -->
<div class="a" style="left:4px;top:565px;width:6px;height:6px;background:#111;border:1px solid #ddd"></div>
<div class="a" style="left:7px;top:568px;width:6px;height:6px;background:#eee"></div>
<svg style="left:18px;top:564px" width="9" height="10" viewBox="0 0 9 10"><path d="M1.5 4 V1.5 H6 M4.5 0 L6.5 1.5 L4.5 3 M7.5 6 V8.5 H3 M4.5 7 L2.5 8.5 L4.5 10" fill="none" stroke="#dcdcdc" stroke-width="1.1"/></svg>
<div class="a" style="left:12px;top:586px;width:16px;height:16px;background:#fff;border:1px solid #222"></div>
<div class="a" style="left:4px;top:578px;width:16px;height:16px;background:#fbf595;border:1px solid #222"></div>
<svg style="left:8px;top:611px" width="16" height="13" viewBox="0 0 16 13"><rect x="0.8" y="0.8" width="14.4" height="11.4" fill="none" stroke="#e6e6e6" stroke-width="1.3"/><circle cx="8" cy="6.5" r="3.3" fill="none" stroke="#e6e6e6" stroke-width="1" stroke-dasharray="1.3 1"/></svg>
<svg style="left:8px;top:632px" width="18" height="14" viewBox="0 0 18 14"><rect x="0.8" y="4.8" width="10" height="8" fill="#535353" stroke="#e6e6e6" stroke-width="1.3"/><rect x="5.8" y="0.8" width="10" height="8" fill="#535353" stroke="#e6e6e6" stroke-width="1.3"/><path d="M18 10 V14 H14Z" fill="#bdbdbd"/></svg>
<!-- tabs -->
<div class="a" style="left:33px;top:58px;width:159px;height:23px;background:#424242;border-top:1px solid #3a3a3a"></div>
<div class="a" style="left:192px;top:58px;width:1px;height:23px;background:#393939"></div>
<div class="a" style="left:193px;top:58px;width:186px;height:23px;background:#424242;border-top:1px solid #3a3a3a"></div>
<div class="a" style="left:379px;top:58px;width:1px;height:23px;background:#393939"></div>
<div class="a" style="left:380px;top:58px;width:206px;height:23px;background:#535353"></div>
<div class="a" style="left:586px;top:58px;width:4px;height:23px;background:#4a4a4a"></div>
<div class="t" style="left:42.5px;top:65px;font-size:11px;color:#b9b9b9;--w:126.5px;transform:scaleX(0.9185);transform-origin:0 0">未标题-1 @ 33.3%(RGB/8#)</div>
<div class="t" style="left:201px;top:65px;font-size:11px;color:#b9b9b9;--w:155px;transform:scaleX(0.9145);transform-origin:0 0">演示.pdf @ 66.7% (图层 1, RGB/8)</div>
<div class="t" style="left:388px;top:65px;font-size:11px;color:#ececec;--w:180px;transform:scaleX(0.9219);transform-origin:0 0">2022-07-20_160125.png @ 100%(索引)</div>
<svg style="left:177px;top:66px" width="7" height="7" viewBox="0 0 7 7"><path d="M1 1 L6 6 M6 1 L1 6" stroke="#d8d8d8" stroke-width="1.6"/></svg>
<svg style="left:364px;top:66px" width="7" height="7" viewBox="0 0 7 7"><path d="M1 1 L6 6 M6 1 L1 6" stroke="#d8d8d8" stroke-width="1.6"/></svg>
<svg style="left:575px;top:66px" width="7" height="7" viewBox="0 0 7 7"><path d="M1 1 L6 6 M6 1 L1 6" stroke="#d8d8d8" stroke-width="1.6"/></svg>

<!-- ============ RIGHT DOCK ============ -->
<div class="a" style="left:918px;top:58px;width:282px;height:9px;background:#444"></div>
<div class="a" style="left:918px;top:67px;width:32px;height:673px;background:#535353"></div>
<div class="a" style="left:950px;top:67px;width:2px;height:673px;background:#3c3c3c"></div>
<div class="a" style="left:1190px;top:67px;width:3px;height:673px;background:#3c3c3c"></div>
<div class="a" style="left:1193px;top:67px;width:7px;height:673px;background:#505050"></div>

<!-- swatches panel -->
<div class="a" style="left:952px;top:67px;width:238px;height:24px;background:#434343"></div>
<div class="a" style="left:952px;top:91px;width:238px;height:220px;background:#535353"></div>
<!-- properties -->
<div class="a" style="left:952px;top:311px;width:238px;height:1px;background:#3c3c3c"></div>
<div class="a" style="left:952px;top:312px;width:238px;height:24px;background:#434343"></div>
<div class="a" style="left:952px;top:336px;width:238px;height:220px;background:#535353"></div>
<div class="a" style="left:952px;top:556px;width:238px;height:2px;background:#3c3c3c"></div>
<!-- layers -->
<div class="a" style="left:952px;top:558px;width:238px;height:23px;background:#434343"></div>
<div class="a" style="left:952px;top:581px;width:238px;height:159px;background:#535353"></div>
<!--PANELS-->
<!-- swatches panel content -->
<div class="a" style="left:952px;top:67px;width:36px;height:24px;background:#4a4a4a;border-right:1px solid #3c3c3c"></div>
<div class="a" style="left:989px;top:67px;width:36px;height:24px;background:#535353"></div>
<div class="t" style="left:960px;top:74px;font-size:11px;color:#a8a8a8;--w:21px;transform:scaleX(0.9545);transform-origin:0 0">颜色</div>
<div class="t" style="left:997px;top:74px;font-size:11px;color:#f0f0f0;--w:21px;transform:scaleX(0.9545);transform-origin:0 0">色板</div>
<svg style="left:1176px;top:76px" width="9" height="7" viewBox="0 0 9 7"><path d="M0 1 H9 M0 3.5 H9 M0 6 H9" stroke="#c8c8c8" stroke-width="1.1"/></svg>
<svg style="left:1178px;top:60px" width="8" height="5" viewBox="0 0 8 5"><path d="M0.5 0.5 L3 2.5 L0.5 4.5Z M4.5 0.5 L7 2.5 L4.5 4.5Z" fill="#d8d8d8"/></svg>
<svg style="left:938px;top:60px" width="8" height="5" viewBox="0 0 8 5"><path d="M3 0.5 L0.5 2.5 L3 4.5Z M7 0.5 L4.5 2.5 L7 4.5Z" fill="#d8d8d8"/></svg>
<div class="a" style="left:918px;top:67px;width:32px;height:34px;background:#535353;border-bottom:1px solid #404040"></div>
<div class="a" style="left:926px;top:69px;width:16px;height:1px;background:#6a6a6a"></div>
<svg style="left:927px;top:79px" width="16" height="16" viewBox="0 0 16 16"><path d="M8 1 L14.5 4.5 V11.5 L8 15 L1.5 11.5 V4.5Z M1.5 4.5 L8 8 L14.5 4.5 M8 8 V15" fill="none" stroke="#e0e0e0" stroke-width="1.1"/><path d="M8 8 L14.5 4.5 V11.5 L8 15Z" fill="#777" opacity="0.6"/></svg>
<div class="a" style="left:955px;top:97px;width:229px;height:16px;background:#494949"></div>
<div class="rs" style="left:957px;top:99px;background:#f7e1a0"></div>
<div class="rs" style="left:971px;top:99px;background:#ffffff"></div>
<div class="rs" style="left:985px;top:99px;background:#a87a52"></div>
<div class="rs" style="left:1000px;top:99px;background:#fff200"></div>
<div class="rs" style="left:1014px;top:99px;background:#fff200"></div>
<div class="rs" style="left:1028px;top:99px;background:#fff200"></div>
<div class="rs" style="left:1042px;top:99px;background:#fff200"></div>
<div class="rs" style="left:1057px;top:99px;background:#a87a52"></div>
<div class="rs" style="left:1071px;top:99px;background:#a87a52"></div>
<div class="rs" style="left:1085px;top:99px;background:#a87a52"></div>
<div class="rs" style="left:1099px;top:99px;background:#a98a50"></div>
<div class="rs" style="left:1113px;top:99px;background:#a98a50"></div>
<div class="rs" style="left:1128px;top:99px;background:#a98a50"></div>
<div class="rs" style="left:1142px;top:99px;background:#b58c55"></div>
<div class="rs" style="left:1156px;top:99px;background:#a98a50"></div>
<div class="a" style="left:952px;top:118px;width:232px;height:171px;background:#4a4a4a"></div>
<div class="a" style="left:1164px;top:118px;width:20px;height:171px;background:#4e4e4e"></div>
<div class="sw" style="left:953px;top:124px;width:13px;height:14px;background:#ff0000"></div>
<div class="sw" style="left:968px;top:124px;width:13px;height:14px;background:#ffff00"></div>
<div class="sw" style="left:983px;top:124px;width:13px;height:14px;background:#00ff00"></div>
<div class="sw" style="left:998px;top:124px;width:13px;height:14px;background:#00ffff"></div>
<div class="sw" style="left:1013px;top:124px;width:13px;height:14px;background:#0000ff"></div>
<div class="sw" style="left:1028px;top:124px;width:13px;height:14px;background:#ff00ff"></div>
<div class="sw" style="left:1043px;top:124px;width:13px;height:14px;background:#ffffff"></div>
<div class="sw" style="left:1059px;top:124px;width:13px;height:14px;background:#e5ecee"></div>
<div class="sw" style="left:1074px;top:124px;width:13px;height:14px;background:#e1e1e1"></div>
<div class="sw" style="left:1089px;top:124px;width:13px;height:14px;background:#dcdcdc"></div>
<div class="sw" style="left:1104px;top:124px;width:13px;height:14px;background:#d6d6d6"></div>
<div class="sw" style="left:1119px;top:124px;width:13px;height:14px;background:#cfcfcf"></div>
<div class="sw" style="left:1134px;top:124px;width:13px;height:14px;background:#bebebe"></div>
<div class="sw" style="left:1149px;top:124px;width:13px;height:14px;background:#c0c0c0"></div>
<div class="sw" style="left:953px;top:140px;width:13px;height:14px;background:#acacac"></div>
<div class="sw" style="left:968px;top:140px;width:13px;height:14px;background:#a2a2a2"></div>
<div class="sw" style="left:983px;top:140px;width:13px;height:14px;background:#ed1c24"></div>
<div class="sw" style="left:998px;top:140px;width:13px;height:14px;background:#fff200"></div>
<div class="sw" style="left:1013px;top:140px;width:13px;height:14px;background:#00a651"></div>
<div class="sw" style="left:1028px;top:140px;width:13px;height:14px;background:#00aeef"></div>
<div class="sw" style="left:1043px;top:140px;width:13px;height:14px;background:#2e3192"></div>
<div class="sw" style="left:1059px;top:140px;width:13px;height:14px;background:#ec008c"></div>
<div class="sw" style="left:1074px;top:140px;width:13px;height:14px;background:#929292"></div>
<div class="sw" style="left:1089px;top:140px;width:13px;height:14px;background:#898989"></div>
<div class="sw" style="left:1104px;top:140px;width:13px;height:14px;background:#7b7b7b"></div>
<div class="sw" style="left:1119px;top:140px;width:13px;height:14px;background:#6b6b6b"></div>
<div class="sw" style="left:1134px;top:140px;width:13px;height:14px;background:#636363"></div>
<div class="sw" style="left:1149px;top:140px;width:13px;height:14px;background:#555555"></div>
<div class="sw" style="left:953px;top:155px;width:13px;height:14px;background:#464646"></div>
<div class="sw" style="left:968px;top:155px;width:13px;height:14px;background:#393939"></div>
<div class="sw" style="left:983px;top:155px;width:13px;height:14px;background:#1c1c1c"></div>
<div class="sw" style="left:998px;top:155px;width:13px;height:14px;background:#000000"></div>
<div class="sw" style="left:1013px;top:155px;width:13px;height:14px;background:#f7977a"></div>
<div class="sw" style="left:1028px;top:155px;width:13px;height:14px;background:#f9ad81"></div>
<div class="sw" style="left:1043px;top:155px;width:13px;height:14px;background:#fdc68a"></div>
<div class="sw" style="left:1059px;top:155px;width:13px;height:14px;background:#fff79a"></div>
<div class="sw" style="left:1074px;top:155px;width:13px;height:14px;background:#c4df9b"></div>
<div class="sw" style="left:1089px;top:155px;width:13px;height:14px;background:#a3d39c"></div>
<div class="sw" style="left:1104px;top:155px;width:13px;height:14px;background:#82ca9d"></div>
<div class="sw" style="left:1119px;top:155px;width:13px;height:14px;background:#7bcdc8"></div>
<div class="sw" style="left:1134px;top:155px;width:13px;height:14px;background:#6ecff6"></div>
<div class="sw" style="left:1149px;top:155px;width:13px;height:14px;background:#7ea7d8"></div>
<div class="sw" style="left:953px;top:170px;width:13px;height:14px;background:#8493ca"></div>
<div class="sw" style="left:968px;top:170px;width:13px;height:14px;background:#8882be"></div>
<div class="sw" style="left:983px;top:170px;width:13px;height:14px;background:#a187be"></div>
<div class="sw" style="left:998px;top:170px;width:13px;height:14px;background:#bc8dbf"></div>
<div class="sw" style="left:1013px;top:170px;width:13px;height:14px;background:#f49ac2"></div>
<div class="sw" style="left:1028px;top:170px;width:13px;height:14px;background:#f6989d"></div>
<div class="sw" style="left:1043px;top:170px;width:13px;height:14px;background:#f26c4f"></div>
<div class="sw" style="left:1059px;top:170px;width:13px;height:14px;background:#f68e55"></div>
<div class="sw" style="left:1074px;top:170px;width:13px;height:14px;background:#fbaf5c"></div>
<div class="sw" style="left:1089px;top:170px;width:13px;height:14px;background:#fff467"></div>
<div class="sw" style="left:1104px;top:170px;width:13px;height:14px;background:#acd372"></div>
<div class="sw" style="left:1119px;top:170px;width:13px;height:14px;background:#7cc576"></div>
<div class="sw" style="left:1134px;top:170px;width:13px;height:14px;background:#3bb878"></div>
<div class="sw" style="left:1149px;top:170px;width:13px;height:14px;background:#1abbb4"></div>
<div class="sw" style="left:953px;top:185px;width:13px;height:14px;background:#00bff3"></div>
<div class="sw" style="left:968px;top:185px;width:13px;height:14px;background:#438ccb"></div>
<div class="sw" style="left:983px;top:185px;width:13px;height:14px;background:#5574b9"></div>
<div class="sw" style="left:998px;top:185px;width:13px;height:14px;background:#605ca8"></div>
<div class="sw" style="left:1013px;top:185px;width:13px;height:14px;background:#855fa8"></div>
<div class="sw" style="left:1028px;top:185px;width:13px;height:14px;background:#a763a8"></div>
<div class="sw" style="left:1043px;top:185px;width:13px;height:14px;background:#f06eaa"></div>
<div class="sw" style="left:1059px;top:185px;width:13px;height:14px;background:#f26d7d"></div>
<div class="sw" style="left:1074px;top:185px;width:13px;height:14px;background:#ed1c24"></div>
<div class="sw" style="left:1089px;top:185px;width:13px;height:14px;background:#f26522"></div>
<div class="sw" style="left:1104px;top:185px;width:13px;height:14px;background:#f7941d"></div>
<div class="sw" style="left:1119px;top:185px;width:13px;height:14px;background:#fff200"></div>
<div class="sw" style="left:1134px;top:185px;width:13px;height:14px;background:#8dc63f"></div>
<div class="sw" style="left:1149px;top:185px;width:13px;height:14px;background:#39b54a"></div>
<div class="sw" style="left:953px;top:200px;width:13px;height:14px;background:#00a651"></div>
<div class="sw" style="left:968px;top:200px;width:13px;height:14px;background:#00a99d"></div>
<div class="sw" style="left:983px;top:200px;width:13px;height:14px;background:#00aeef"></div>
<div class="sw" style="left:998px;top:200px;width:13px;height:14px;background:#0072bc"></div>
<div class="sw" style="left:1013px;top:200px;width:13px;height:14px;background:#0054a6"></div>
<div class="sw" style="left:1028px;top:200px;width:13px;height:14px;background:#2e3192"></div>
<div class="sw" style="left:1043px;top:200px;width:13px;height:14px;background:#662d91"></div>
<div class="sw" style="left:1059px;top:200px;width:13px;height:14px;background:#92278f"></div>
<div class="sw" style="left:1074px;top:200px;width:13px;height:14px;background:#ec008c"></div>
<div class="sw" style="left:1089px;top:200px;width:13px;height:14px;background:#ed145b"></div>
<div class="sw" style="left:1104px;top:200px;width:13px;height:14px;background:#c00d0d"></div>
<div class="sw" style="left:1119px;top:200px;width:13px;height:14px;background:#c4470c"></div>
<div class="sw" style="left:1134px;top:200px;width:13px;height:14px;background:#c47e0c"></div>
<div class="sw" style="left:1149px;top:200px;width:13px;height:14px;background:#c8a914"></div>
<div class="sw" style="left:953px;top:215px;width:13px;height:14px;background:#6a9a1b"></div>
<div class="sw" style="left:968px;top:215px;width:13px;height:14px;background:#1a8c38"></div>
<div class="sw" style="left:983px;top:215px;width:13px;height:14px;background:#0d7d3b"></div>
<div class="sw" style="left:998px;top:215px;width:13px;height:14px;background:#0a8a7e"></div>
<div class="sw" style="left:1013px;top:215px;width:13px;height:14px;background:#0b7cc2"></div>
<div class="sw" style="left:1028px;top:215px;width:13px;height:14px;background:#0b56a8"></div>
<div class="sw" style="left:1043px;top:215px;width:13px;height:14px;background:#0b3e8b"></div>
<div class="sw" style="left:1059px;top:215px;width:13px;height:14px;background:#14106a"></div>
<div class="sw" style="left:1074px;top:215px;width:13px;height:14px;background:#4b0c6e"></div>
<div class="sw" style="left:1089px;top:215px;width:13px;height:14px;background:#7b0b6f"></div>
<div class="sw" style="left:1104px;top:215px;width:13px;height:14px;background:#b80a66"></div>
<div class="sw" style="left:1119px;top:215px;width:13px;height:14px;background:#c50c3e"></div>
<div class="sw" style="left:1134px;top:215px;width:13px;height:14px;background:#a60a10"></div>
<div class="sw" style="left:1149px;top:215px;width:13px;height:14px;background:#9c3b0a"></div>
<div class="sw" style="left:953px;top:230px;width:13px;height:14px;background:#9c5608"></div>
<div class="sw" style="left:968px;top:230px;width:13px;height:14px;background:#a08a0a"></div>
<div class="sw" style="left:983px;top:230px;width:13px;height:14px;background:#5a8a14"></div>
<div class="sw" style="left:998px;top:230px;width:13px;height:14px;background:#0e7a2c"></div>
<div class="sw" style="left:1013px;top:230px;width:13px;height:14px;background:#0a6c31"></div>
<div class="sw" style="left:1028px;top:230px;width:13px;height:14px;background:#0a6e6a"></div>
<div class="sw" style="left:1043px;top:230px;width:13px;height:14px;background:#0a6ba3"></div>
<div class="sw" style="left:1059px;top:230px;width:13px;height:14px;background:#0b3774"></div>
<div class="sw" style="left:1074px;top:230px;width:13px;height:14px;background:#0b3a78"></div>
<div class="sw" style="left:1089px;top:230px;width:13px;height:14px;background:#070a5c"></div>
<div class="sw" style="left:1104px;top:230px;width:13px;height:14px;background:#3a0a5c"></div>
<div class="sw" style="left:1119px;top:230px;width:13px;height:14px;background:#5e0a56"></div>
<div class="sw" style="left:1134px;top:230px;width:13px;height:14px;background:#990a58"></div>
<div class="sw" style="left:1149px;top:230px;width:13px;height:14px;background:#9f0a35"></div>
<div class="sw" style="left:953px;top:245px;width:13px;height:14px;background:#d6c8a8"></div>
<div class="sw" style="left:968px;top:245px;width:13px;height:14px;background:#a89580"></div>
<div class="sw" style="left:983px;top:245px;width:13px;height:14px;background:#857262"></div>
<div class="sw" style="left:998px;top:245px;width:13px;height:14px;background:#5a4c44"></div>
<div class="sw" style="left:1013px;top:245px;width:13px;height:14px;background:#3a3533"></div>
<div class="sw" style="left:1028px;top:245px;width:13px;height:14px;background:#dcb27c"></div>
<div class="sw" style="left:1043px;top:245px;width:13px;height:14px;background:#b98b55"></div>
<div class="sw" style="left:1059px;top:245px;width:13px;height:14px;background:#a47a2e"></div>
<div class="sw" style="left:1074px;top:245px;width:13px;height:14px;background:#8a5a1c"></div>
<div class="sw" style="left:1089px;top:245px;width:13px;height:14px;background:#7a4210"></div>
<svg style="left:1127px;top:295px" width="10" height="11" viewBox="0 0 10 11"><path d="M0.7 0.7 H9.3 V10.3 H0.7Z" fill="none" stroke="#e6e6e6" stroke-width="1.3"/><path d="M3 3 H7 V8 H5.5 V4.5 H3Z" fill="#e6e6e6"/></svg>
<svg style="left:1150px;top:294px" width="10" height="12" viewBox="0 0 10 12"><path d="M0.5 2.5 H9.5 M3.5 2.5 V0.8 H6.5 V2.5 M1.5 2.5 L2 11.3 H8 L8.5 2.5 M4 4.5 V9.5 M6 4.5 V9.5" fill="none" stroke="#9a9a9a" stroke-width="1"/></svg>
<div class="a" style="left:952px;top:312px;width:36px;height:24px;background:#535353"></div>
<div class="a" style="left:989px;top:312px;width:36px;height:24px;background:#4a4a4a;border-left:1px solid #3c3c3c"></div>
<div class="t" style="left:960px;top:319px;font-size:11px;color:#f0f0f0;--w:21px;transform:scaleX(0.9545);transform-origin:0 0">属性</div>
<div class="t" style="left:997px;top:319px;font-size:11px;color:#a8a8a8;--w:21px;transform:scaleX(0.9545);transform-origin:0 0">调整</div>
<svg style="left:1176px;top:321px" width="9" height="7" viewBox="0 0 9 7"><path d="M0 1 H9 M0 3.5 H9 M0 6 H9" stroke="#c8c8c8" stroke-width="1.1"/></svg>
<div class="a" style="left:961px;top:341px;width:19px;height:19px;background:#3a3a3a"></div>
<svg style="left:965px;top:344px" width="11" height="13" viewBox="0 0 11 13"><path d="M0.7 0.7 H6.5 L10.3 4.5 V12.3 H0.7Z M6.5 0.7 V4.5 H10.3" fill="none" stroke="#e6e6e6" stroke-width="1.2"/></svg>
<div class="t" style="left:985px;top:346px;font-size:11px;color:#e6e6e6;--w:39px;transform:scaleX(0.8864);transform-origin:0 0">文档属性</div>
<div class="a" style="left:952px;top:363px;width:238px;height:1px;background:#464646"></div>
<div class="a" style="left:1176px;top:364px;width:14px;height:192px;background:#505050"></div>
<div class="t" style="left:962px;top:374px;font-size:10px;color:#d0d0d0">W:</div>
<div class="t" style="left:980px;top:374px;font-size:10px;color:#d0d0d0">13.41 厘米</div>
<div class="t" style="left:1061px;top:374px;font-size:10px;color:#d0d0d0">H:</div>
<div class="t" style="left:1079px;top:374px;font-size:10px;color:#d0d0d0">19 厘米</div>
<div class="t" style="left:966px;top:393px;font-size:10px;color:#d0d0d0">X:</div>
<div class="t" style="left:980px;top:393px;font-size:10px;color:#d0d0d0">0</div>
<div class="t" style="left:1063px;top:393px;font-size:10px;color:#d0d0d0">Y:</div>
<div class="t" style="left:1079px;top:393px;font-size:10px;color:#d0d0d0">0</div>
<div class="t" style="left:960px;top:421px;font-size:10px;color:#d0d0d0;--w:93px;transform:scaleX(0.9619);transform-origin:0 0">分辨率：96 像素/英寸</div>
<div class="a" style="left:952px;top:558px;width:36px;height:23px;background:#535353"></div>
<div class="a" style="left:989px;top:558px;width:36px;height:23px;background:#4a4a4a;border-left:1px solid #3c3c3c"></div>
<div class="a" style="left:1026px;top:558px;width:37px;height:23px;background:#4a4a4a;border-left:1px solid #3c3c3c"></div>
<div class="t" style="left:960px;top:565px;font-size:11px;color:#f0f0f0;--w:21px;transform:scaleX(0.9545);transform-origin:0 0">图层</div>
<div class="t" style="left:997px;top:565px;font-size:11px;color:#c8c8c8;--w:21px;transform:scaleX(0.9545);transform-origin:0 0">通道</div>
<div class="t" style="left:1034px;top:565px;font-size:11px;color:#c8c8c8;--w:21px;transform:scaleX(0.9545);transform-origin:0 0">路径</div>
<svg style="left:1176px;top:567px" width="9" height="7" viewBox="0 0 9 7"><path d="M0 1 H9 M0 3.5 H9 M0 6 H9" stroke="#c8c8c8" stroke-width="1.1"/></svg>
<div class="a" style="left:956px;top:590px;width:71px;height:18px;background:#4a4a4a;border-radius:2px"></div>
<svg style="left:962px;top:594px" width="10" height="10" viewBox="0 0 10 10"><circle cx="4" cy="4" r="3" fill="none" stroke="#d8d8d8" stroke-width="1.4"/><path d="M6.2 6.2 L9.3 9.3" stroke="#d8d8d8" stroke-width="1.6"/></svg>
<div class="t" style="left:975px;top:594px;font-size:10.5px;color:#9a9a9a">类型</div>
<svg style="left:1017px;top:596px" width="7" height="5" viewBox="0 0 7 5"><path d="M0.5 0.8 L3.5 3.8 L6.5 0.8" fill="none" stroke="#6a6a6a" stroke-width="1"/></svg>
<div class="a" style="left:1031px;top:591px;width:1px;height:16px;background:#474747"></div>
<svg style="left:1041px;top:593px" width="12" height="12" viewBox="0 0 12 12"><rect x="0.6" y="0.6" width="10.8" height="9" fill="none" stroke="#c8c8c8" stroke-width="1.1"/><path d="M2.5 8 L5 5 L7 7 L8.5 5.5 L10 8Z" fill="#c8c8c8"/></svg>
<svg style="left:1061px;top:593px" width="12" height="12" viewBox="0 0 12 12"><circle cx="6" cy="5.5" r="5" fill="#c8c8c8"/><path d="M9.5 2 L2.5 9 A5 5 0 0 0 9.5 2Z" fill="#535353"/></svg>
<svg style="left:1081px;top:593px" width="12" height="12" viewBox="0 0 12 12"><path d="M1 2.5 V1 H11 V2.5 M6 1 V10.5 M4 10.5 H8" fill="none" stroke="#c8c8c8" stroke-width="1.5"/></svg>
<svg style="left:1101px;top:593px" width="12" height="12" viewBox="0 0 12 12"><path d="M2 2 H10 V10 H2Z" fill="none" stroke="#c8c8c8" stroke-width="1.1"/><path d="M0.5 0.5 H3.5 V3.5 H0.5Z M8.5 0.5 H11.5 V3.5 H8.5Z M0.5 8.5 H3.5 V11.5 H0.5Z M8.5 8.5 H11.5 V11.5 H8.5Z" fill="#c8c8c8"/></svg>
<svg style="left:1121px;top:593px" width="12" height="12" viewBox="0 0 12 12"><path d="M3 0.7 H7 L9.5 3 V11.3 H3Z" fill="none" stroke="#c8c8c8" stroke-width="1.1"/><rect x="1" y="6" width="5" height="5" fill="#c8c8c8"/></svg>
<div class="a" style="left:1144px;top:590px;width:9px;height:9px;border-radius:50%;background:#bdbdbd"></div>
<div class="a" style="left:1145px;top:600px;width:7px;height:8px;background:#4a4a4a"></div>
<div class="a" style="left:952px;top:608px;width:238px;height:1px;background:#474747"></div>
<div class="a" style="left:956px;top:614px;width:95px;height:17px;background:#4a4a4a;border-radius:2px"></div>
<div class="t" style="left:962px;top:617px;font-size:10.5px;color:#9a9a9a">正常</div>
<svg style="left:1043px;top:621px" width="6" height="4" viewBox="0 0 6 4"><path d="M0.5 0.5 L3 3 L5.5 0.5" fill="none" stroke="#6a6a6a" stroke-width="1"/></svg>
<div class="t" style="left:1059px;top:617px;font-size:10.5px;color:#8a8a8a;--w:43px;transform:scaleX(0.9164);transform-origin:0 0">不透明度:</div>
<div class="a" style="left:1107px;top:614px;width:32px;height:17px;background:#4a4a4a"></div>
<div class="t" style="left:1109px;top:618px;font-size:10px;color:#7a7a8a">100%</div>
<div class="a" style="left:1140px;top:614px;width:11px;height:17px;background:#4c4c4c"></div>
<svg style="left:1142px;top:620px" width="7" height="5" viewBox="0 0 7 5"><path d="M0.5 0.8 L3.5 3.8 L6.5 0.8" fill="none" stroke="#6a6a6a" stroke-width="1"/></svg>
<div class="a" style="left:952px;top:632px;width:238px;height:1px;background:#474747"></div>
<div class="t" style="left:958px;top:641px;font-size:10.5px;color:#8a8a8a;--w:23px;transform:scaleX(0.9229);transform-origin:0 0">锁定:</div>
<svg style="left:987px;top:640px" width="12" height="12" viewBox="0 0 12 12"><path d="M0.6 0.6 H11.4 V11.4 H0.6Z" fill="none" stroke="#c8c8c8" stroke-width="1"/><path d="M2 2 H4.5 V4.5 H2Z M7.5 2 H10 V4.5 H7.5Z M4.5 4.5 H7.5 V7.5 H4.5Z M2 7.5 H4.5 V10 H2Z M7.5 7.5 H10 V10 H7.5Z" fill="#c8c8c8"/></svg>
<svg style="left:1004px;top:640px" width="12" height="12" viewBox="0 0 12 12"><path d="M1 11.5 C1 9.5 2 8 3.8 7.8 L4.7 8.7 C4.5 10.5 3 11.6 1 11.5Z M4.3 7.3 L10.5 0.8 C11 0.5 11.5 1 11.2 1.4 L5.3 8.2Z" fill="#c8c8c8"/></svg>
<svg style="left:1023px;top:640px" width="12" height="12" viewBox="0 0 12 12"><path d="M6 0.5 L8 2.5 H6.8 V5.2 H9.5 V4 L11.5 6 L9.5 8 V6.8 H6.8 V9.5 H8 L6 11.5 L4 9.5 H5.2 V6.8 H2.5 V8 L0.5 6 L2.5 4 V5.2 H5.2 V2.5 H4Z" fill="#c8c8c8"/></svg>
<svg style="left:1042px;top:640px" width="12" height="12" viewBox="0 0 12 12"><path d="M3 0.5 V9 H11.5 M0.5 3 H9 V11.5" fill="none" stroke="#c8c8c8" stroke-width="1.1"/><path d="M5 7 L10 2" stroke="#c8c8c8" stroke-width="1"/></svg>
<svg style="left:1061px;top:640px" width="12" height="12" viewBox="0 0 12 12"><path d="M3 5 V3.5 A3 3 0 0 1 9 3.5 V5" fill="none" stroke="#c8c8c8" stroke-width="1.4"/><rect x="1.5" y="5" width="9" height="6.5" fill="#c8c8c8"/></svg>
<div class="t" style="left:1080px;top:641px;font-size:10.5px;color:#8a8a8a;--w:23px;transform:scaleX(0.9229);transform-origin:0 0">填充:</div>
<div class="a" style="left:1107px;top:637px;width:32px;height:17px;background:#4a4a4a"></div>
<div class="t" style="left:1109px;top:641px;font-size:10px;color:#7a7a8a">100%</div>
<div class="a" style="left:1140px;top:637px;width:11px;height:17px;background:#4c4c4c"></div>
<svg style="left:1142px;top:643px" width="7" height="5" viewBox="0 0 7 5"><path d="M0.5 0.8 L3.5 3.8 L6.5 0.8" fill="none" stroke="#6a6a6a" stroke-width="1"/></svg>
<div class="a" style="left:952px;top:693px;width:238px;height:47px;background:#4c4c4c"></div>
<div class="a" style="left:976px;top:660px;width:200px;height:33px;background:#696969"></div>
<div class="a" style="left:1176px;top:660px;width:14px;height:80px;background:#505050"></div>
<svg style="left:958px;top:674px" width="14" height="9" viewBox="0 0 14 9"><path d="M0.5 4.5 C3 0.5 11 0.5 13.5 4.5 C11 8.5 3 8.5 0.5 4.5Z" fill="#f0f0f0"/><circle cx="7" cy="4.5" r="2.2" fill="#535353"/></svg>
<div class="a" style="left:980px;top:663px;width:22px;height:27px;background:#1e1e1e"></div>
<svg style="left:981px;top:664px" width="20" height="25" viewBox="256 135 425 601" preserveAspectRatio="none"><rect x="256" y="135" width="425" height="601" fill="#fdf7c6"/><use href="#fl"/></svg>
<div class="t" style="left:1009px;top:672px;font-size:11px;color:#f0f0f0;--w:20px;transform:scaleX(0.9091);transform-origin:0 0">索引</div>
<svg style="left:1154px;top:671px" width="10" height="13" viewBox="0 0 10 13"><path d="M2.5 5.5 V3.5 A2.5 2.5 0 0 1 7.5 3.5 V5.5" fill="none" stroke="#e6e6e6" stroke-width="1.2"/><rect x="0.8" y="5.5" width="8.4" height="6.8" fill="none" stroke="#e6e6e6" stroke-width="1.2"/><rect x="4" y="7.8" width="2" height="2.2" fill="#e6e6e6"/></svg>
<!--/PANELS-->
</body></html>
